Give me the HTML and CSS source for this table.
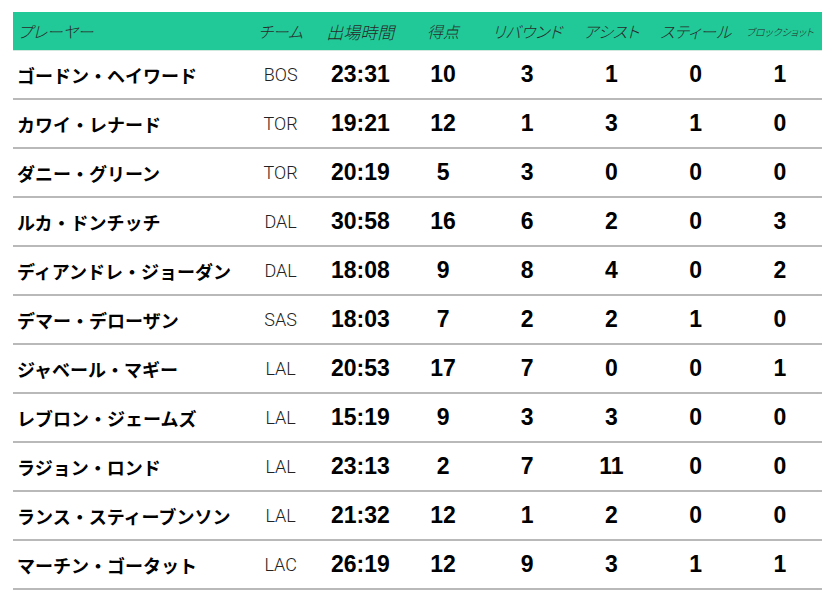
FILE: index.html
```html
<!DOCTYPE html>
<html lang="ja">
<head>
<meta charset="utf-8">
<title>スタッツ</title>
<link rel="stylesheet" href="styles.css">
</head>
<body>
<table class="stats">
  <colgroup>
    <col class="c-name"><col class="c-team"><col class="c-time"><col class="c-num"><col class="c-num"><col class="c-num"><col class="c-num"><col class="c-num">
  </colgroup>
  <thead>
    <tr>
      <th class="h-name">プレーヤー</th>
      <th>チーム</th>
      <th class="h-time">出場時間</th>
      <th>得点</th>
      <th>リバウンド</th>
      <th>アシスト</th>
      <th>スティール</th>
      <th class="h-small">ブロックショット</th>
    </tr>
  </thead>
  <tbody>
    <tr><td class="name">ゴードン・ヘイワード</td><td class="team">BOS</td><td class="num">23:31</td><td class="num">10</td><td class="num">3</td><td class="num">1</td><td class="num">0</td><td class="num">1</td></tr>
    <tr><td class="name">カワイ・レナード</td><td class="team">TOR</td><td class="num">19:21</td><td class="num">12</td><td class="num">1</td><td class="num">3</td><td class="num">1</td><td class="num">0</td></tr>
    <tr><td class="name">ダニー・グリーン</td><td class="team">TOR</td><td class="num">20:19</td><td class="num">5</td><td class="num">3</td><td class="num">0</td><td class="num">0</td><td class="num">0</td></tr>
    <tr><td class="name">ルカ・ドンチッチ</td><td class="team">DAL</td><td class="num">30:58</td><td class="num">16</td><td class="num">6</td><td class="num">2</td><td class="num">0</td><td class="num">3</td></tr>
    <tr><td class="name">ディアンドレ・ジョーダン</td><td class="team">DAL</td><td class="num">18:08</td><td class="num">9</td><td class="num">8</td><td class="num">4</td><td class="num">0</td><td class="num">2</td></tr>
    <tr><td class="name">デマー・デローザン</td><td class="team">SAS</td><td class="num">18:03</td><td class="num">7</td><td class="num">2</td><td class="num">2</td><td class="num">1</td><td class="num">0</td></tr>
    <tr><td class="name">ジャベール・マギー</td><td class="team">LAL</td><td class="num">20:53</td><td class="num">17</td><td class="num">7</td><td class="num">0</td><td class="num">0</td><td class="num">1</td></tr>
    <tr><td class="name">レブロン・ジェームズ</td><td class="team">LAL</td><td class="num">15:19</td><td class="num">9</td><td class="num">3</td><td class="num">3</td><td class="num">0</td><td class="num">0</td></tr>
    <tr><td class="name">ラジョン・ロンド</td><td class="team">LAL</td><td class="num">23:13</td><td class="num">2</td><td class="num">7</td><td class="num">11</td><td class="num">0</td><td class="num">0</td></tr>
    <tr><td class="name">ランス・スティーブンソン</td><td class="team">LAL</td><td class="num">21:32</td><td class="num">12</td><td class="num">1</td><td class="num">2</td><td class="num">0</td><td class="num">0</td></tr>
    <tr><td class="name">マーチン・ゴータット</td><td class="team">LAC</td><td class="num">26:19</td><td class="num">12</td><td class="num">9</td><td class="num">3</td><td class="num">1</td><td class="num">1</td></tr>
  </tbody>
</table>
</body>
</html>
```

FILE: styles.css
```css
html, body {
  margin: 0;
  padding: 0;
  background: #ffffff;
}

body {
  padding: 12px 0 0 13px;
  font-family: "Noto Sans CJK JP", "Liberation Sans", sans-serif;
  color: #000;
}

.stats {
  border-collapse: collapse;
  table-layout: fixed;
  width: 809px;
}

.c-name { width: 228px; }
.c-team { width: 78px; }
.c-time { width: 81px; }
.c-num { width: 84px; }

.stats thead th {
  background: #20c997;
  height: 38px;
  padding: 0;
  border-bottom: 1px solid #cfe9df;
  font-weight: 300;
  font-style: italic;
  font-size: 16px;
  color: #2a2a2a;
  text-align: center;
  font-feature-settings: "palt";
  white-space: nowrap;
}

.stats thead th.h-name {
  text-align: left;
  padding-left: 5px;
}

.stats thead th.h-time {
  font-size: 17px;
}

.stats thead th.h-small {
  font-size: 10px;
}

.stats tbody td {
  height: 47px;
  padding: 0;
  border-bottom: 2px solid #b9b9b9;
  text-align: center;
  white-space: nowrap;
}

.stats td.name {
  text-align: left;
  padding-left: 4px;
  font-weight: 700;
  font-size: 18px;
}

.stats td.team {
  font-family: "Roboto", "Liberation Sans", sans-serif;
  font-weight: 300;
  font-size: 18px;
  color: #222;
}

.stats td.num {
  font-family: "Liberation Sans", Arial, sans-serif;
  font-weight: 700;
  font-size: 23px;
}
```
